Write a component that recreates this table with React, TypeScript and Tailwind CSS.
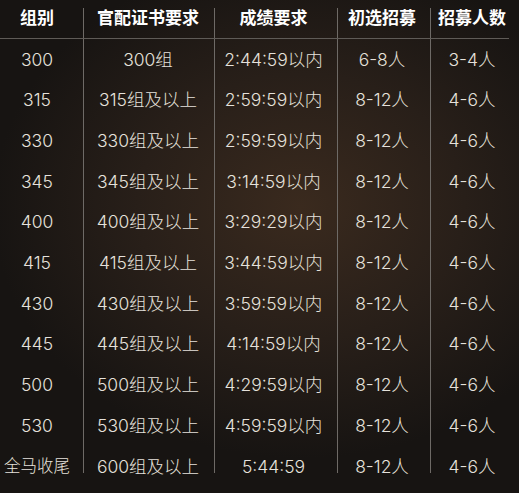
import React from "react";

type Row = [string, string, string, string, string];

const rows: Row[] = [
  ["300", "300组", "2:44:59以内", "6-8人", "3-4人"],
  ["315", "315组及以上", "2:59:59以内", "8-12人", "4-6人"],
  ["330", "330组及以上", "2:59:59以内", "8-12人", "4-6人"],
  ["345", "345组及以上", "3:14:59以内", "8-12人", "4-6人"],
  ["400", "400组及以上", "3:29:29以内", "8-12人", "4-6人"],
  ["415", "415组及以上", "3:44:59以内", "8-12人", "4-6人"],
  ["430", "430组及以上", "3:59:59以内", "8-12人", "4-6人"],
  ["445", "445组及以上", "4:14:59以内", "8-12人", "4-6人"],
  ["500", "500组及以上", "4:29:59以内", "8-12人", "4-6人"],
  ["530", "530组及以上", "4:59:59以内", "8-12人", "4-6人"],
  ["全马收尾", "600组及以上", "5:44:59", "8-12人", "4-6人"],
];

const headers = ["组别", "官配证书要求", "成绩要求", "初选招募", "招募人数"];

// per-column nudges so text sits where the picture has it
const colPad = ["pr-[9px]", "pr-[2px]", "pr-[5px]", "pr-[4px]", "pl-[4px]"];

export default function App() {
  return (
    <div
      className="relative h-[493px] w-[519px] overflow-hidden bg-[#161311] bg-[radial-gradient(ellipse_70%_60%_at_58%_42%,#3a2a1e_0%,#281f19_45%,#171412_85%)] leading-none text-[#e6e2dc]"
      style={{ fontFamily: '"Inter", "Noto Sans CJK SC", sans-serif' }}
    >
      <div className="w-[509px]">
        {/* header */}
        <div className="grid h-[39px] grid-cols-[83px_131px_123px_93px_79px] border-b border-[#5f5b57]">
          {headers.map((h, i) => (
            <div
              key={h}
              className={`mt-[8px] flex h-[30px] items-center justify-center pb-[10px] text-[17px] font-bold text-white ${colPad[i]} ${
                i > 0 ? "border-l border-[#6e6a66]" : ""
              }`}
            >
              {h}
            </div>
          ))}
        </div>

        {/* body */}
        {rows.map((r, ri) => {
          const last = ri === rows.length - 1;
          return (
            <div key={ri} className="grid grid-cols-[83px_131px_123px_93px_79px]">
              {r.map((c, ci) => (
                <div
                  key={ci}
                  className={`flex items-center justify-center font-light ${colPad[ci]} ${
                    last ? "h-[27px] pt-[14px]" : "h-[40.7px]"
                  } ${ci > 0 ? "border-l border-[#6e6a66]" : ""} ${
                    ci === 0 && last ? "text-[16.5px]" : "text-[17.5px]"
                  }`}
                >
                  {c}
                </div>
              ))}
            </div>
          );
        })}
      </div>
    </div>
  );
}
